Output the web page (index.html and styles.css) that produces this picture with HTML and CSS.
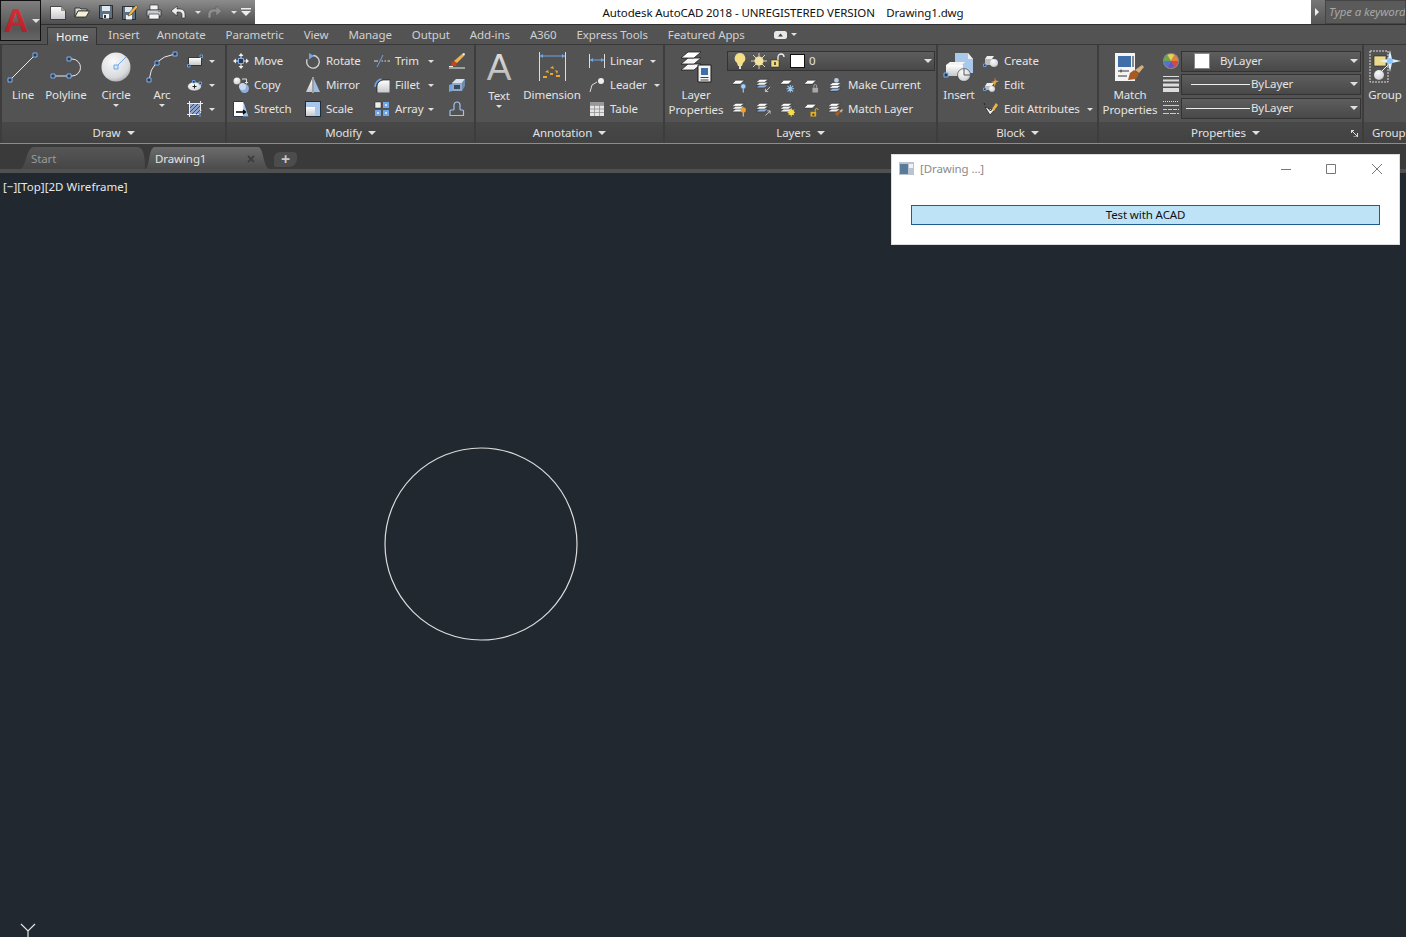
FILE: index.html
```html
<!DOCTYPE html>
<html>
<head>
    <title>Autodesk AutoCAD 2018</title>
    <link rel="stylesheet" href="styles.css">
</head>
<body>
    <svg class="defs" width="0" height="0">
        <defs>
            <radialGradient id="ball" cx="40%" cy="30%" r="80%">
                <stop offset="0" stop-color="#fafafa"/><stop offset="0.7" stop-color="#d8dade"/><stop offset="1" stop-color="#9a9ca0"/>
            </radialGradient>
            <linearGradient id="paper" x1="0" y1="0" x2="0" y2="1">
                <stop offset="0" stop-color="#fff"/><stop offset="1" stop-color="#c4c6ca"/>
            </linearGradient>
            <linearGradient id="logo-red" x1="0" y1="0" x2="0" y2="1">
                <stop offset="0" stop-color="#e2343a"/><stop offset="1" stop-color="#a81c24"/>
            </linearGradient>
            <linearGradient id="glyph-grey" x1="0" y1="0" x2="0" y2="1">
                <stop offset="0" stop-color="#e4e4e4"/><stop offset="1" stop-color="#b0b0b0"/>
            </linearGradient>
            <symbol id="sheets" viewBox="0 0 16 16">
                <path d="M4 8h9l-4 3H0z" fill="#f4f4f4" stroke="#1c1c1c" stroke-width=".4"/>
                <path d="M4 5h9L9 8H0z" fill="#f4f4f4" stroke="#1c1c1c" stroke-width=".4"/>
                <path d="M4 2h9L9 5H0z" fill="#fff" stroke="#1c1c1c" stroke-width=".4"/>
            </symbol>
            <symbol id="sheets-blue" viewBox="0 0 16 16">
                <path d="M4 8h9l-4 3H0z" fill="#8fb8e8" stroke="#1c1c1c" stroke-width=".4"/>
                <path d="M4 5h9L9 8H0z" fill="#f4f4f4" stroke="#1c1c1c" stroke-width=".4"/>
                <path d="M4 2h9L9 5H0z" fill="#fff" stroke="#1c1c1c" stroke-width=".4"/>
            </symbol>
            <symbol id="sheet" viewBox="0 0 16 16">
                <path d="M4 3h9L9 7H0z" fill="#fff" stroke="#1c1c1c" stroke-width=".5"/>
            </symbol>
        </defs>
    </svg>

    <div class="app-button">
        <svg class="app-logo" width="39" height="39" viewBox="0 0 39 39"><text x="15" y="31" text-anchor="middle" class="logo-letter" fill="url(#logo-red)">A</text></svg>
        <span class="caret app-caret"></span>
    </div>

    <header class="titlebar">
        <div class="qat">
            <svg class="qi" viewBox="0 0 16 16"><path d="M.5 2.500h11l4 4v9H.5z" fill="url(#paper)" stroke="#2a2a2a" stroke-width=".8"/><path d="M11.500 2.500v4h4" fill="#999" stroke="#555" stroke-width=".5"/></svg>
            <svg class="qi" viewBox="0 0 16 16"><path d="M1 13V4h5l1 1h6v2H4z" fill="#d8d8d8" stroke="#222" stroke-width=".8"/><path d="M1 13l3-6h11.500l-3.500 6z" fill="#f5efd8" stroke="#222" stroke-width=".8"/></svg>
            <svg class="qi" viewBox="0 0 16 16"><path d="M1.500 1.500h13v13h-13z" fill="#5d7185" stroke="#1c1c1c" stroke-width=".8"/><path d="M4 2h8v5H4z" fill="#dfe6ee"/><path d="M5 10h6v4.500H5z" fill="#f2f2f2"/><path d="M6 11h2v3H6z" fill="#333"/></svg>
            <svg class="qi" viewBox="0 0 16 16"><path d="M.5 2.500h13v13H.5z" fill="#5d7185" stroke="#1c1c1c" stroke-width=".8"/><path d="M3 3h7v5H3z" fill="#dfe6ee"/><path d="M4 11h6v4.500H4z" fill="#f2f2f2"/><path d="M7 9l7-8 2 2-7 8-3 1z" fill="#e9b44c" stroke="#333" stroke-width=".5"/></svg>
            <svg class="qi" viewBox="0 0 16 16"><path d="M4 1h8v5H4z" fill="#f4f4f4" stroke="#222" stroke-width=".6"/><path d="M1 6h14v6H1z" fill="#c8ccd0" stroke="#222" stroke-width=".7"/><path d="M3 10h10v5H3z" fill="#f4f4f4" stroke="#222" stroke-width=".6"/><path d="M12 7.500h2" stroke="#5b8fc8"/></svg>
            <svg class="qi" viewBox="0 0 16 16"><path d="M1 7l6-5v3h3c3 0 5 2 5 5v4h-3v-3c0-2-1-3-3-3H7v4z" fill="#ececec" stroke="#222" stroke-width=".6"/></svg>
            <span class="caret qat-caret-undo"></span>
            <svg class="qi qi-redo" viewBox="0 0 16 16"><path d="M15 7L9 2v3H6c-3 0-5 2-5 5v4h3v-3c0-2 1-3 3-3h2v4z" fill="#8e8e8e" stroke="#555" stroke-width=".5"/></svg>
            <span class="caret qat-caret-redo"></span>
            <svg class="qat-menu" viewBox="0 0 10 8"><path d="M0 0h10v1.500H0z" fill="#eee"/><path d="M0 3h10L5 8z" fill="#eee"/></svg>
        </div>
        <div class="title-text">Autodesk AutoCAD 2018 - UNREGISTERED VERSION &nbsp;&nbsp;&nbsp;Drawing1.dwg</div>
        <div class="search">
            <div class="search-arrow"></div>
            <div class="search-box">Type a keyword</div>
        </div>
    </header>

    <nav class="ribbon-tabs">
        <span class="rtab rtab-active">Home</span>
        <span class="rtab rtab-insert">Insert</span>
        <span class="rtab">Annotate</span>
        <span class="rtab">Parametric</span>
        <span class="rtab">View</span>
        <span class="rtab">Manage</span>
        <span class="rtab">Output</span>
        <span class="rtab">Add-ins</span>
        <span class="rtab">A360</span>
        <span class="rtab">Express Tools</span>
        <span class="rtab">Featured Apps</span>
        <span class="rtab-toggle"><svg width="13" height="8" viewBox="0 0 13 8"><rect width="13" height="8" rx="2.500" fill="#e8e8e8"/><path d="M4 5.500l2.500-3 2.500 3z" fill="#444"/></svg><span class="caret"></span></span>
    </nav>

    <section class="ribbon">
        <div class="panel panel-draw">
            <div class="panel-body">
                <div class="big">
                    <svg class="big-icon" viewBox="0 0 32 34"><path d="M3 30L28 5" stroke="#e8e8e8" fill="none"/><path d="M1 28h4v4H1zM26 3h4v4h-4z" fill="#2a3a50" stroke="#7fb0ee"/></svg>
                    <span>Line</span>
                </div>
                <div class="big">
                    <svg class="big-icon" viewBox="0 0 32 34"><path d="M3 26H19M19 9h3a8.500 8.500 0 0 1 0 17h-3" stroke="#e8e8e8" fill="none"/><path d="M1 24h4v4H1zM17 24h4v4h-4zM17 7h4v4h-4z" fill="#2a3a50" stroke="#7fb0ee"/></svg>
                    <span>Polyline</span>
                </div>
                <div class="big">
                    <svg class="big-icon" viewBox="0 0 32 34"><circle cx="16" cy="17" r="14.500" fill="url(#ball)"/><path d="M16 17L26 7" stroke="#6ea6e8"/><path d="M14 15h4v4h-4z" fill="#dde6f2" stroke="#6ea6e8"/></svg>
                    <span>Circle</span>
                    <span class="caret big-caret"></span>
                </div>
                <div class="big">
                    <svg class="big-icon" viewBox="0 0 32 34"><path d="M3 30Q5 8 29 4" stroke="#e8e8e8" fill="none"/><path d="M1 28h4v4H1zM9 11h4v4H9zM27 2h4v4h-4z" fill="#2a3a50" stroke="#7fb0ee"/></svg>
                    <span>Arc</span>
                    <span class="caret big-caret"></span>
                </div>
                <div class="col col-draw">
                    <div class="tool"><svg class="ic" viewBox="0 0 16 16"><path d="M1.500 4.500h13v8h-13z" fill="url(#paper)" stroke="#1c1c1c" stroke-width=".8"/><path d="M.5 11.500h2.500v2.500H.5zM13 2h2.500v2.500H13z" fill="#2a3a50" stroke="#7fb0ee" stroke-width=".8"/></svg><span class="caret push"></span></div>
                    <div class="tool"><svg class="ic" viewBox="0 0 16 16"><ellipse cx="7.500" cy="9.500" rx="7" ry="4.500" fill="url(#ball)" stroke="#222" stroke-width=".4"/><path d="M5.500 9.500h4M7.500 7.500v4" stroke="#222"/><path d="M5.500 3.500h2.500V6H5.500zM12 5h2.500v2.500H12z" fill="#2a3a50" stroke="#7fb0ee" stroke-width=".8"/></svg><span class="caret push"></span></div>
                    <div class="tool"><svg class="ic" viewBox="0 0 16 16"><path d="M3 3h10v10H3z" fill="#8fa4c8"/><path d="M3 7l4-4M3 11l8-8M5 13l8-8M9 13l4-4" stroke="#3a4a70"/><path d="M0 2.500h16M2.500 0v16M0 13.500h12M13.500 0v12" stroke="#eee"/><path d="M9 14l6-5M13 12v4" stroke="#6ea6e8"/></svg><span class="caret push"></span></div>
                </div>
            </div>
            <div class="panel-title">Draw <span class="caret caret-wide"></span></div>
        </div>

        <div class="panel panel-modify">
            <div class="panel-body">
                <div class="col col-move">
                    <div class="tool"><svg class="ic" viewBox="0 0 16 16"><path d="M8 0l2.500 3h-5zM8 16l2.500-3h-5zM0 8l3-2.500v5zM16 8l-3-2.500v5z" fill="#f0f0f0"/><path d="M3 8h2M11 8h2M8 3v2M8 11v2" stroke="#f0f0f0"/><path d="M5.500 5.500h5v5h-5z" fill="#2a3a50" stroke="#7fb0ee"/></svg><span>Move</span></div>
                    <div class="tool"><svg class="ic" viewBox="0 0 16 16"><circle cx="4" cy="4" r="3.500" fill="url(#ball)"/><circle cx="11.500" cy="11.500" r="4.500" fill="#8fb0d8"/><circle cx="9.500" cy="9.500" r="3.500" fill="#c8d8ec"/><path d="M9 2h4.500v4M12 5l1.500 1.500L15 5" stroke="#ddd" fill="none"/></svg><span>Copy</span></div>
                    <div class="tool"><svg class="ic" viewBox="0 0 16 16"><path d="M.5.500h10l5 15H.5z" fill="#fff" stroke="#2a3a50"/><path d="M10.500.500l5 15H10z" fill="#9fbde0"/><path d="M3 11h9M10 9l2.500 2-2.500 2" stroke="#000" stroke-width="1.300" fill="none"/></svg><span>Stretch</span></div>
                </div>
                <div class="col col-rotate">
                    <div class="tool"><svg class="ic" viewBox="0 0 16 16"><path d="M8 2.500a6.300 6.300 0 1 1-5.800 3.800" stroke="#d0d0d0" stroke-width="1.400" fill="none"/><path d="M4 0v6.500L9 3z" fill="#6ea6e8"/></svg><span>Rotate</span></div>
                    <div class="tool"><svg class="ic" viewBox="0 0 16 16"><path d="M7 2L1 15h6z" fill="url(#paper)"/><path d="M9 2l6 13H9z" fill="#9fbde0"/><path d="M8 0v16" stroke="#eee"/></svg><span>Mirror</span></div>
                    <div class="tool"><svg class="ic" viewBox="0 0 16 16"><path d="M0 0h16v16H0z" fill="#1f2c3c"/><path d="M1 1h14v14H1z" fill="#a8c6ea"/><path d="M1 6h9v9H1z" fill="url(#paper)"/></svg><span>Scale</span></div>
                </div>
                <div class="col col-trim">
                    <div class="tool"><svg class="ic" viewBox="0 0 16 16"><path d="M0 8h4" stroke="#ddd"/><path d="M7.500 8h1.500M10.500 8h1.500M13.500 8h2.500" stroke="#ddd"/><path d="M3 14L9 2" stroke="#6ea6e8"/></svg><span>Trim</span><span class="caret push"></span></div>
                    <div class="tool"><svg class="ic" viewBox="0 0 16 16"><path d="M3 16V9a6.500 6.500 0 0 1 6.500-6H16v13z" fill="url(#paper)" stroke="#1c1c1c" stroke-width=".7"/><path d="M1 10a8 8 0 0 1 6.500-8" stroke="#6ea6e8" stroke-width="1.500" fill="none"/></svg><span>Fillet</span><span class="caret push"></span></div>
                    <div class="tool"><svg class="ic" viewBox="0 0 16 16"><path d="M1 1h6v6H1z" fill="#eee" stroke="#222" stroke-width=".5"/><path d="M9 1h6v6H9zM1 9h6v6H1zM9 9h6v6H9z" fill="#6ea6e8"/><path d="M11 3h2v2h-2zM3 11h2v2H3zM11 11h2v2h-2z" fill="#cfe0f5"/></svg><span>Array</span><span class="caret push"></span></div>
                </div>
                <div class="col col-edit">
                    <div class="tool"><svg class="ic" viewBox="0 0 16 16"><path d="M0 15h16M0 13.500h4" stroke="#eee"/><path d="M2 13l1-4 3-1 2 2-1 3z" fill="#c8441c"/><path d="M5 8l8-7 2 2-7 7z" fill="#eeb24a"/><path d="M13 1l2 2 1-2-1-1z" fill="#fff"/></svg></div>
                    <div class="tool"><svg class="ic" viewBox="0 0 16 16"><path d="M0 8l3-1v7l-3 1z" fill="#6ea6e8"/><path d="M3 6h10v8H3z" fill="#8fa8c8"/><path d="M3 6l4-4h9l-3 4z" fill="#d8e2ee"/><path d="M13 6l3-4v7l-3 5z" fill="#6e8cb0"/><path d="M5 8h6v4H5z" fill="#39495e"/></svg></div>
                    <div class="tool"><svg class="ic" viewBox="0 0 16 16"><path d="M1 14.500V10a1 1 0 0 1 1-1h2a1 1 0 0 0 1-1V4a3 3 0 0 1 6 0v4a1 1 0 0 0 1 1h1.500a1 1 0 0 1 1 1v4.500z" fill="none" stroke="#9fc3ee" stroke-width="1.200"/></svg></div>
                </div>
            </div>
            <div class="panel-title">Modify <span class="caret caret-wide"></span></div>
        </div>

        <div class="panel panel-annotation">
            <div class="panel-body">
                <div class="big">
                    <svg class="big-icon-text" viewBox="0 0 32 42"><text x="16" y="34" text-anchor="middle" class="text-letter" fill="url(#glyph-grey)">A</text></svg>
                    <span>Text</span>
                    <span class="caret big-caret"></span>
                </div>
                <div class="big">
                    <svg class="big-icon" viewBox="0 0 32 34"><path d="M3.500 2v29M29.500 2v29" stroke="#ddd"/><path d="M4 6h25" stroke="#6ea6e8"/><path d="M4 6l3-2v4zM29 6l-3-2v4z" fill="#6ea6e8"/><path d="M9 22l3-2 1 3zM14 18l3-2 1 3zM19 20l3 1-1 3zM7 26h4v2H7zM20 25h4v2h-4zM14 23h3v2h-3z" fill="#e9a82c"/></svg>
                    <span>Dimension</span>
                </div>
                <div class="col col-linear">
                    <div class="tool"><svg class="ic" viewBox="0 0 16 16"><path d="M.5 1v14M15.500 1v14" stroke="#ddd"/><path d="M1 7h14" stroke="#6ea6e8"/><path d="M1 7l3-2v4zM15 7l-3-2v4z" fill="#6ea6e8"/></svg><span>Linear</span><span class="caret caret-after"></span></div>
                    <div class="tool"><svg class="ic" viewBox="0 0 16 16"><path d="M1 15l2-7 5-3" stroke="#ddd" fill="none"/><circle cx="12" cy="4" r="3" fill="#eee"/></svg><span>Leader</span><span class="caret caret-after"></span></div>
                    <div class="tool"><svg class="ic" viewBox="0 0 16 16"><path d="M1 1h14v14H1z" fill="#e4e4e4"/><path d="M1 4.500h14M1 8h14M1 11.500h14M5.500 4v11M10.500 4v11" stroke="#888" stroke-width=".7"/><path d="M1 1h14v3H1z" fill="#999"/></svg><span>Table</span></div>
                </div>
            </div>
            <div class="panel-title">Annotation <span class="caret caret-wide"></span></div>
        </div>

        <div class="panel panel-layers">
            <div class="panel-body">
                <div class="big">
                    <svg class="big-icon" viewBox="0 0 32 34"><path d="M8 14h13l-7 6H1z" fill="#f6f6f6" stroke="#1c1c1c" stroke-width=".8"/><path d="M8 8h13l-7 6H1z" fill="#f6f6f6" stroke="#1c1c1c" stroke-width=".8"/><path d="M8 2h13l-7 6H1z" fill="#fff" stroke="#1c1c1c" stroke-width=".8"/><path d="M18 15h13v17H18z" fill="#f4f4f4" stroke="#1c1c1c"/><path d="M21 18h7v7h-7z" fill="#3f6ea8"/><path d="M20.500 27.500h8M20.500 30h8" stroke="#444"/></svg>
                    <span>Layer<br>Properties</span>
                </div>
                <div class="layer-tools">
                    <div class="combo combo-layer">
                        <svg class="lc lc-bulb" viewBox="0 0 12 16"><path d="M6 0a5.500 5.500 0 0 1 3 10l-1 3H4l-1-3A5.500 5.500 0 0 1 6 0z" fill="#f4df86"/><path d="M5 13h2v3H5z" fill="#ddd"/></svg>
                        <svg class="lc lc-sun" viewBox="0 0 16 16"><path d="M8 0v16M0 8h16M2 2l12 12M14 2L2 14" stroke="#e8e0c0" stroke-width=".9"/><circle cx="8" cy="8" r="4.500" fill="#f3e3a0"/></svg>
                        <svg class="lc lc-lock" viewBox="0 0 15 16"><path d="M1 7h8v7H1z" fill="#f2da80" stroke="#222" stroke-width=".5"/><path d="M4 9h2v3H4z" fill="#555"/><path d="M8 7V4a3 3 0 0 1 6 0" stroke="#eee" stroke-width="1.300" fill="none"/></svg>
                        <span class="swatch swatch-layer"></span>
                        <span class="combo-text">0</span>
                        <span class="caret combo-caret"></span>
                    </div>
                    <div class="layer-row">
                        <svg class="ly" viewBox="0 0 16 16"><use href="#sheet"/><path d="M12 11v5" stroke="#ddd"/><circle cx="12" cy="9.500" r="2.500" fill="#a8d0f5" stroke="#5a8fc8" stroke-width=".5"/></svg>
                        <svg class="ly" viewBox="0 0 16 16"><use href="#sheets-blue"/><path d="M15 10l-5 5M10 12v3h3" stroke="#ccc" fill="none"/></svg>
                        <svg class="ly" viewBox="0 0 16 16"><use href="#sheet"/><path d="M11 8v8M7 12h8M8 9l6 6M14 9l-6 6" stroke="#9cc8f2" stroke-width="1.100"/></svg>
                        <svg class="ly" viewBox="0 0 16 16"><use href="#sheet"/><path d="M9 11h6v5H9z" fill="#a8a8a8"/><path d="M10.500 11V9a1.500 1.500 0 0 1 3 0v2" stroke="#a8a8a8" fill="none"/></svg>
                        <svg class="ly" viewBox="0 0 16 16"><g transform="translate(1 3.500)"><use href="#sheets-blue" width="16" height="16"/></g><circle cx="9" cy="3" r="2.500" fill="#b8cfe8"/></svg>
                        <span>Make Current</span>
                    </div>
                    <div class="layer-row">
                        <svg class="ly" viewBox="0 0 16 16"><use href="#sheets"/><path d="M12 11v5" stroke="#ddd"/><circle cx="12" cy="9" r="2.800" fill="#f0a030"/></svg>
                        <svg class="ly" viewBox="0 0 16 16"><use href="#sheets-blue"/><path d="M10 15l5-5M12 10h3v3" stroke="#ccc" fill="none"/></svg>
                        <svg class="ly" viewBox="0 0 16 16"><use href="#sheets"/><path d="M12 7v9M8 11.500h8M9 8.500l6 6M15 8.500l-6 6" stroke="#f5dc50"/><circle cx="12" cy="11.500" r="3" fill="#f5dc50"/></svg>
                        <svg class="ly" viewBox="0 0 16 16"><use href="#sheet"/><path d="M7 11h6v5H7z" fill="#e8b020"/><path d="M9 13h2v2H9z" fill="#333"/><path d="M12 11V9a1.500 1.500 0 0 1 3 0" stroke="#e8b020" fill="none"/></svg>
                        <svg class="ly" viewBox="0 0 16 16"><use href="#sheets"/><path d="M7 13l4-3 2 2-3 4z" fill="#a85a20"/><path d="M12 10l3-2 1 1-2 3z" fill="#d8b080"/></svg>
                        <span>Match Layer</span>
                    </div>
                </div>
            </div>
            <div class="panel-title">Layers <span class="caret caret-wide"></span></div>
        </div>

        <div class="panel panel-block">
            <div class="panel-body">
                <div class="big">
                    <svg class="big-icon" viewBox="0 0 32 34"><path d="M12 3h13l5 6v14H12z" fill="#a9c8ea"/><path d="M25 3l5 6h-5z" fill="#eee"/><path d="M3 15l4-3h15l-3 3z" fill="#f4f4f4"/><path d="M3 15h17v11H3z" fill="url(#paper)"/><circle cx="21" cy="25" r="6.500" fill="url(#ball)" stroke="#333" stroke-width=".6"/><path d="M21 19v6h6" stroke="#555" fill="none"/><path d="M1 23h4v4H1z" fill="#2a3a50" stroke="#7fb0ee"/></svg>
                    <span>Insert</span>
                </div>
                <div class="col col-block">
                    <div class="tool"><svg class="ic" viewBox="0 0 16 16"><path d="M4 3h7l-2 3H2z" fill="#eee"/><path d="M2 6h8v6H2z" fill="#bbb"/><circle cx="11" cy="10" r="4" fill="url(#ball)"/><path d="M.5 11h2.500v2.500H.5z" fill="#2a3a50" stroke="#7fb0ee" stroke-width=".8"/></svg><span>Create</span></div>
                    <div class="tool"><svg class="ic" viewBox="0 0 16 16"><path d="M4 6h7l-2 3H2z" fill="#eee"/><path d="M2 9h6v4H2z" fill="#bbb"/><circle cx="9" cy="12" r="3" fill="url(#ball)"/><path d="M12 0l.5 3.500L16 4l-3 1.500L11.500 10 11 6 8 5l3.500-1z" fill="#f0a830"/><path d="M.5 11h2.500v2.500H.5z" fill="#2a3a50" stroke="#7fb0ee" stroke-width=".8"/></svg><span>Edit</span></div>
                    <div class="tool"><svg class="ic" viewBox="0 0 16 16"><path d="M1 2l1 2" stroke="#222"/><path d="M2 6l5 8 6-7-5 1z" fill="#f2f2f2" stroke="#1c1c1c" stroke-width=".7"/><path d="M5 7l2.500 3L10 7" stroke="#222" fill="none"/><path d="M9 8l4-6 2 2-4 6z" fill="#e9b44c"/></svg><span>Edit Attributes</span><span class="caret caret-after"></span></div>
                </div>
            </div>
            <div class="panel-title">Block <span class="caret caret-wide"></span></div>
        </div>

        <div class="panel panel-properties">
            <div class="panel-body">
                <div class="big">
                    <svg class="big-icon" viewBox="0 0 32 34"><path d="M1 3h20v28H1z" fill="#f4f4f4"/><path d="M4 6h13v11H4z" fill="#3f6ea8"/><path d="M18 6h2v11h-2z" fill="#888"/><path d="M4 21h11M4 26h9M7 19.500v3" stroke="#333"/><path d="M14 30l2-7 4-3 5 4-3 5z" fill="#a85a20"/><path d="M21 20l7-5 2 2-5 6z" fill="#d8b080"/></svg>
                    <span>Match<br>Properties</span>
                </div>
                <div class="prop-grid">
                    <div class="prop-row">
                        <svg class="ic" viewBox="0 0 16 16"><circle cx="8" cy="8" r="8" fill="#8a8a8a"/><path d="M8 8H1A7 7 0 0 1 4.500 2z" fill="#6aa84a"/><path d="M8 8L4.500 2a7 7 0 0 1 7 0z" fill="#e8d050"/><path d="M8 8l3.500-6A7 7 0 0 1 15 8z" fill="#e8803a"/><path d="M8 8h7a7 7 0 0 1-3.500 6z" fill="#d04a4a"/><path d="M8 8l3.500 6a7 7 0 0 1-7 0z" fill="#7050c0"/><path d="M8 8l-3.500 6A7 7 0 0 1 1 8z" fill="#4a78d0"/></svg>
                        <div class="combo combo-prop"><span class="swatch swatch-color"></span><span class="combo-text">ByLayer</span><span class="caret combo-caret"></span></div>
                    </div>
                    <div class="prop-row">
                        <svg class="ic" viewBox="0 0 16 16"><path d="M0 0h16v1H0zM0 3.500h16v2H0zM0 7.500h16v3H0zM0 12h16v4H0z" fill="#ddd"/></svg>
                        <div class="combo combo-prop combo-weight"><span class="line-sample"></span><span class="combo-text">ByLayer</span><span class="caret combo-caret"></span></div>
                    </div>
                    <div class="prop-row prop-row-last">
                        <svg class="ic" viewBox="0 0 16 16"><path d="M0 1.500h16" stroke="#ddd" stroke-dasharray="1 1" fill="none"/><path d="M0 5.500h16" stroke="#ccc" fill="none"/><path d="M0 9.500h16" stroke="#ccc" stroke-dasharray="4 1" fill="none"/><path d="M0 13.500h16" stroke="#ccc" stroke-dasharray="6 1" fill="none"/></svg>
                        <div class="combo combo-prop combo-type"><span class="line-sample"></span><span class="combo-text">ByLayer</span><span class="caret combo-caret"></span></div>
                    </div>
                </div>
            </div>
            <div class="panel-title">Properties <span class="caret caret-wide"></span>
                <svg class="launcher" viewBox="0 0 7 7"><path d="M0 .5h3M.5 0v3M1 1l5 5M6.500 3v4h-4" stroke="#ddd" fill="none"/></svg>
            </div>
        </div>

        <div class="panel panel-groups">
            <div class="panel-body">
                <div class="big">
                    <svg class="big-icon" viewBox="0 0 32 34"><path d="M1 1h18v31H1z" fill="none" stroke="#ddd" stroke-dasharray="2 1"/><path d="M5 6h12v10H5z" fill="#ecd98a" stroke="#222" stroke-width=".6"/><circle cx="10" cy="25" r="5" fill="url(#ball)"/><path d="M13 21l6-6" stroke="#eee"/><path d="M21 0l2 9 9 2-9 2-2 9-2-9-9-2 9-2z" fill="#dff0ff"/><circle cx="21" cy="11" r="3" fill="#8cc8ff"/></svg>
                    <span>Group</span>
                </div>
            </div>
            <div class="panel-title">Groups</div>
        </div>
    </section>

    <div class="doc-tabs">
        <div class="dtab">Start</div>
        <div class="dtab dtab-active">Drawing1
            <svg class="dtab-close" viewBox="0 0 8 8"><path d="M1 1l6 6M7 1L1 7" stroke="#3e3e3e" stroke-width="1.800"/></svg>
        </div>
        <div class="dtab-new">+</div>
    </div>

    <main class="canvas">
        <div class="viewport-label">[&minus;][Top][2D Wireframe]</div>
        <svg class="circle-shape" width="196" height="196" viewBox="0 0 196 196"><circle cx="98" cy="98" r="96" fill="none" stroke="#dcdcdc" stroke-width="1.200"/></svg>
        <svg class="ucs" width="16" height="14" viewBox="0 0 16 14"><path d="M1 1l7 7 7-7M8 8v6" stroke="#e4e4e4" stroke-width="1.200" fill="none"/></svg>

        <div class="dialog">
            <div class="dialog-head">
                <svg class="dialog-icon" width="15" height="13" viewBox="0 0 15 13"><path d="M0 0h15v13H0z" fill="#b9c4d0"/><path d="M1 2h8v10H1z" fill="#5a7a9a"/><path d="M10 2h4v4h-4z" fill="#eef2f6"/></svg>
                <span class="dialog-title">[Drawing ...]</span>
                <div class="dialog-controls">
                    <svg width="10" height="10" viewBox="0 0 10 10"><path d="M0 5.500h10" stroke="#777"/></svg>
                    <svg width="10" height="10" viewBox="0 0 10 10"><path d="M.5.500h9v9h-9z" fill="none" stroke="#777"/></svg>
                    <svg class="dialog-close" width="10" height="10" viewBox="0 0 10 10"><path d="M0 0l10 10M10 0L0 10" stroke="#777"/></svg>
                </div>
            </div>
            <div class="dialog-body">
                <div class="dialog-button">Test with ACAD</div>
            </div>
        </div>
    </main>
</body>
</html>
```

FILE: styles.css
```css
* { box-sizing: border-box; }
html, body { margin: 0; height: 100%; }
body { width: 1406px; height: 937px; overflow: hidden; display: flex; flex-direction: column; background: #212830; color: #e4e4e4; font-family: "Noto Sans", "Open Sans", sans-serif; font-size: 11.5px; letter-spacing: -0.1px; position: relative; }
.defs { position: absolute; }

.caret { display: inline-block; width: 0; height: 0; flex: none; border-left: 3px solid transparent; border-right: 3px solid transparent; border-top: 3px solid #e0e0e0; }
.caret-wide { border-left-width: 4px; border-right-width: 4px; border-top-width: 4px; margin-left: 2px; }
.caret-after { margin-left: 7px; }
.push { margin-left: auto; }

/* title bar */
.app-button { position: absolute; left: 0; top: 0; width: 41px; height: 41px; z-index: 5; background: linear-gradient(#7e7e7e, #565656 70%, #666); border: 1px solid #111; }
.app-logo { display: block; }
.logo-letter { font-family: "Liberation Sans", sans-serif; font-weight: 700; font-size: 34px; }
.app-caret { position: absolute; left: 31px; top: 18px; border-left-width: 4px; border-right-width: 4px; border-top-width: 4px; }
.titlebar { height: 24px; background: #fff; display: flex; align-items: center; flex: none; }
.qat { width: 255px; height: 24px; padding-left: 50px; display: flex; align-items: center; gap: 8px; background: linear-gradient(#8c8c8c, #4e4e4e); }
.qi { width: 16px; height: 16px; flex: none; }
.qi-redo { margin-left: -2px; }
.qat-caret-undo { margin-left: 1px; }
.qat-menu { width: 10px; height: 8px; margin-left: -4px; }
.title-text { flex: 1; text-align: center; color: #111; white-space: nowrap; }
.search { width: 95px; height: 24px; display: flex; background: #4c4c4c; }
.search-arrow { width: 14px; background: linear-gradient(#777, #555); position: relative; }
.search-arrow::after { content: ""; position: absolute; left: 4px; top: 8px; border-top: 4px solid transparent; border-bottom: 4px solid transparent; border-left: 4px solid #eee; }
.search-box { flex: 1; background: #5a5a5a; border: 1px solid #444; color: #a8a8a8; font-style: italic; line-height: 22px; padding-left: 3px; white-space: nowrap; overflow: hidden; }

/* ribbon tabs */
.ribbon-tabs { height: 21px; flex: none; padding-left: 55px; display: flex; align-items: stretch; gap: 20px; background: #535353; border-top: 1px solid #2e2e2e; border-bottom: 1px solid #383838; color: #d0d0d0; }
.rtab { line-height: 19px; }
.rtab-active { margin: 2px -9px -1px -8px; padding: 1px 8px 0; line-height: 16px; color: #f4f4f4; background: linear-gradient(#606060, #535353); border: 1px solid #333; border-bottom: 0; }
.rtab-insert { margin-right: -3px; }
.rtab-toggle { display: flex; align-items: center; gap: 4px; margin-left: 9px; }

/* ribbon panels */
.ribbon { height: 99px; flex: none; padding-left: 2px; display: flex; gap: 2px; background: #3d3d3d; border-bottom: 1px solid #8c8c8c; overflow: hidden; }
.panel { flex: none; display: flex; flex-direction: column; background: #535353; }
.panel-body { height: 77px; flex: none; display: grid; grid-auto-flow: column; padding-top: 4px; color: #e4e4e4; white-space: nowrap; }
.panel-title { height: 21px; flex: none; display: flex; align-items: center; justify-content: center; gap: 4px; background: linear-gradient(#484848, #424242); color: #e2e2e2; position: relative; }
.panel-draw { width: 223px; }
.panel-draw .panel-body { grid-template-columns: 42px 44px 56px 36px 1fr; }
.panel-modify { width: 247px; }
.panel-modify .panel-body { grid-template-columns: 78px 69px 75px 1fr; }
.panel-annotation { width: 187px; }
.panel-annotation .panel-body { grid-template-columns: 46px 60px 1fr; }
.panel-layers { width: 271px; }
.panel-layers .panel-body { grid-template-columns: 62px 1fr; }
.panel-block { width: 159px; }
.panel-block .panel-body { grid-template-columns: 42px 1fr; }
.panel-properties { width: 263px; }
.panel-properties .panel-body { grid-template-columns: 62px 1fr; }
.panel-properties .panel-title { padding-right: 10px; }
.panel-groups { width: 60px; }
.panel-groups .panel-body { grid-template-columns: 42px; }
.panel-groups .panel-title { justify-content: flex-start; padding-left: 8px; }
.launcher { position: absolute; right: 4px; top: 8px; width: 7px; height: 7px; }

.big { display: flex; flex-direction: column; align-items: center; text-align: center; line-height: 15px; }
.big-icon { width: 32px; height: 34px; margin: 1px 0 3px; flex: none; overflow: visible; }
.big-icon-text { width: 32px; height: 42px; margin: -3px 0 0; flex: none; }
.big-caret { margin-top: 2px; }
.text-letter { font-family: "Liberation Sans", sans-serif; font-size: 37px; }

.col { display: flex; flex-direction: column; }
.tool { height: 24px; display: flex; align-items: center; }
.tool > span:first-of-type:not(.caret) { margin: 0 0 2px 5px; }
.ic { width: 16px; height: 16px; flex: none; }
.col-draw { padding-left: 7px; padding-right: 10px; }
.col-move { padding-left: 6px; }
.col-trim { padding-right: 15px; }
.col-linear { padding-left: 7px; }
.col-block { padding-left: 3px; }

/* layers */
.layer-row { height: 24px; padding-left: 5px; display: flex; align-items: center; gap: 9px; }
.layer-row > span { margin: 0 0 2px -4px; }
.ly { width: 15px; height: 16px; flex: none; }
.combo { height: 20px; display: flex; align-items: center; position: relative; background: linear-gradient(#5e5e5e, #484848); border: 1px solid #333; }
.combo-text { margin-bottom: 2px; }
.combo-caret { position: absolute; right: 2px; top: 7px; border-left-width: 4px; border-right-width: 4px; border-top-width: 4px; }
.combo-layer { width: 208px; margin: 2px 0; padding-left: 6px; }
.lc { flex: none; height: 16px; }
.lc-bulb { width: 12px; margin-right: 5px; }
.lc-sun { width: 16px; margin-right: 3px; }
.lc-lock { width: 15px; margin-right: 5px; }
.swatch { display: block; flex: none; background: #fff; }
.swatch-layer { width: 15px; height: 14px; border: 1px solid #111; margin-right: 4px; }

/* properties */
.prop-grid { padding-top: 2px; display: flex; flex-direction: column; gap: 3px; }
.prop-row { display: flex; align-items: center; gap: 2px; height: 20px; padding-left: 2px; }
.prop-row-last { margin-top: 1px; }
.combo-prop { width: 180px; height: 21px; }
.swatch-color { width: 16px; height: 16px; margin: 0 10px 0 12px; border: 1px solid #888; }
.line-sample { height: 1px; background: #eee; margin-right: 1px; flex: none; }
.combo-weight { padding-left: 9px; }
.combo-weight .line-sample { width: 59px; }
.combo-type { padding-left: 4px; }
.combo-type .line-sample { width: 64px; }

/* document tabs */
.doc-tabs { height: 25px; flex: none; padding: 3px 0 0 20px; display: flex; background: #3a3a3a; }
.dtab { width: 125px; height: 22px; padding-left: 11px; line-height: 24px; color: #9a9a9a; background: linear-gradient(#565656, #464646); clip-path: path("M0 22C6 22 6 0 14 0H116C123 0 125 6 125 22Z"); }
.dtab-active { padding-left: 10px; color: #e4e4e4; background: linear-gradient(#6c6c6c, #4c4c4c); position: relative; clip-path: path("M0 22C5 22 3 0 10 0H113C119 0 118 22 125 22Z"); }
.dtab-close { position: absolute; left: 102px; top: 8px; width: 8px; height: 8px; }
.dtab-new { width: 23px; height: 15px; margin: 5px 0 0 4px; text-align: center; line-height: 14px; font-size: 16px; font-weight: 700; color: #c8c8c8; background: #4c4c4c; border-radius: 6px 4px 8px 2px; }

/* drawing area */
.canvas { flex: 1; position: relative; background: #212830; border-top: 4px solid #505050; }
.viewport-label { padding: 5px 0 0 3px; line-height: 17px; color: #e8e8e8; letter-spacing: 0.04px; }
.circle-shape { position: absolute; left: 383px; top: 273px; }
.ucs { position: absolute; left: 20px; bottom: 0; }

/* floating dialog */
.dialog { position: absolute; left: 891px; top: -19px; width: 509px; height: 91px; background: #fff; border: 1px solid #ddd; color: #111; }
.dialog-head { height: 27px; display: flex; align-items: center; padding: 0 17px 0 7px; }
.dialog-icon { flex: none; margin-right: 6px; }
.dialog-title { color: #8a8a8a; }
.dialog-controls { margin-left: auto; display: flex; gap: 35px; }
.dialog-close { margin-left: 1px; }
.dialog-body { padding: 23px 19px 0; }
.dialog-button { height: 20px; line-height: 18px; text-align: center; background: #bee3f6; border: 1px solid #1f5c8f; }
```
